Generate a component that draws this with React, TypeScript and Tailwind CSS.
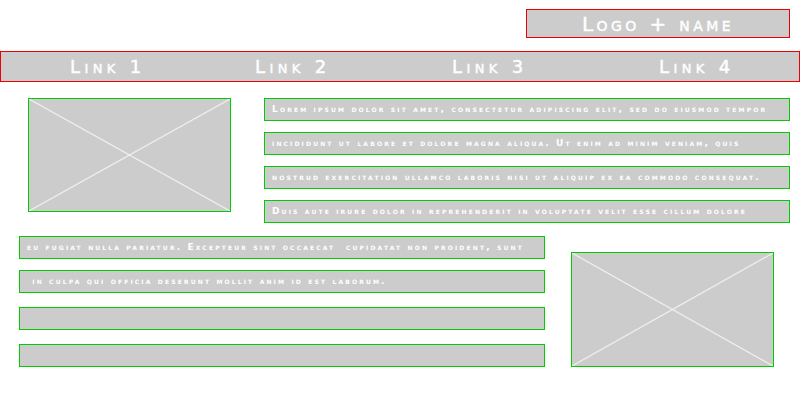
import React from "react";

const Placeholder = ({ className }: { className: string }) => (
  <div className={`relative border border-[#00cc00] bg-[#cccccc] ${className}`}>
    <svg className="absolute inset-0 h-full w-full" viewBox="0 0 100 100" preserveAspectRatio="none">
      <line x1="0" y1="0" x2="100" y2="100" stroke="#eeeeee" strokeWidth="1.3" vectorEffect="non-scaling-stroke" />
      <line x1="100" y1="0" x2="0" y2="100" stroke="#eeeeee" strokeWidth="1.3" vectorEffect="non-scaling-stroke" />
    </svg>
  </div>
);

const Row = ({ text, className = "" }: { text?: string; className?: string }) => (
  <div
    className={`flex h-[23px] items-center overflow-hidden whitespace-pre border border-[#00cc00] bg-[#cccccc] pl-[7px] text-[9px] font-bold tracking-[2.15px] text-white [font-variant:small-caps] ${className}`}
  >
    {text}
  </div>
);

export default function App() {
  return (
    <div className="h-[400px] w-[800px] overflow-hidden bg-white font-['DejaVu_Sans',sans-serif]">
      <header className="flex justify-end pr-[10px] pt-[9px]">
        <div className="flex h-[29px] w-[264px] items-center justify-center border border-[#ee0000] bg-[#cccccc] text-[20px] tracking-[3.4px] text-white [font-variant:small-caps] [-webkit-text-stroke:0.45px_white]">
          Logo + name
        </div>
      </header>

      <nav className="mt-[13px] grid h-[31px] grid-cols-[185px_197px_207px_1fr] items-center border border-[#ee0000] bg-[#cccccc] pl-[69px] text-[18px] tracking-[4.4px] text-white [font-variant:small-caps] [-webkit-text-stroke:0.45px_white]">
        <span>Link 1</span>
        <span>Link 2</span>
        <span>Link 3</span>
        <span>Link 4</span>
      </nav>

      <section className="mt-[16px] flex">
        <Placeholder className="ml-[28px] h-[114px] w-[203px]" />
        <div className="ml-[33px] flex w-[526px] flex-col gap-[11px]">
          <Row text="Lorem ipsum dolor sit amet, consectetur adipiscing elit, sed do eiusmod tempor" />
          <Row text="incididunt ut labore et dolore magna aliqua. Ut enim ad minim veniam, quis" />
          <Row text="nostrud exercitation ullamco laboris nisi ut aliquip ex ea commodo consequat." />
          <Row text="Duis aute irure dolor in reprehenderit in voluptate velit esse cillum dolore" />
        </div>
      </section>

      <section className="mt-[13px] flex">
        <div className="ml-[19px] flex w-[526px] flex-col">
          <Row text="eu fugiat nulla pariatur. Excepteur sint occaecat  cupidatat non proident, sunt" />
          <Row className="mt-[11px]" text=" in culpa qui officia deserunt mollit anim id est laborum." />
          <Row className="mt-[14px]" />
          <Row className="mt-[14px]" />
        </div>
        <Placeholder className="ml-[26px] mt-[16px] h-[115px] w-[203px]" />
      </section>
    </div>
  );
}
